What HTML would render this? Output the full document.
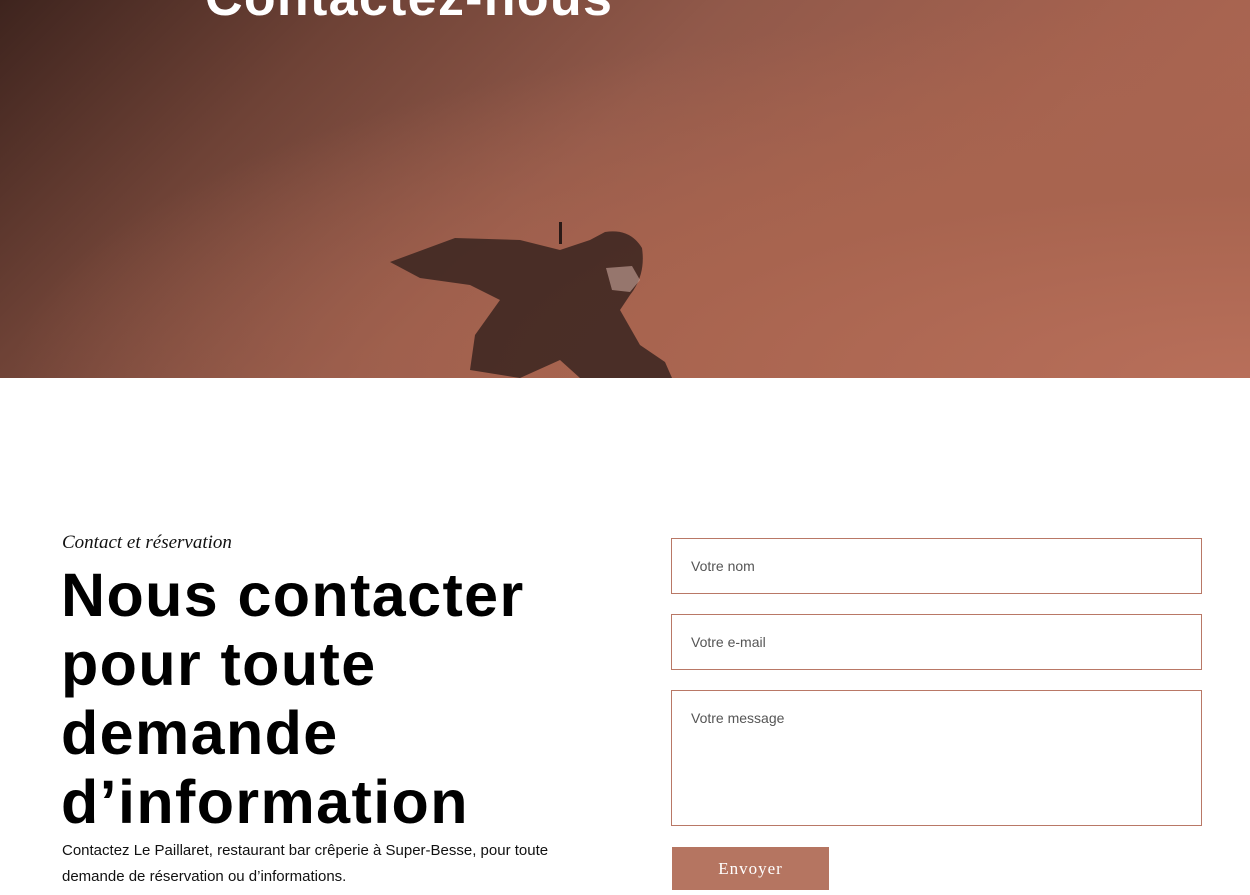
<!DOCTYPE html>
<html><head><meta charset="utf-8"><style>
body{margin:0;width:1250px;height:895px;overflow:hidden;background:#fff;font-family:"Liberation Sans",sans-serif;position:relative}
.hero{position:absolute;left:0;top:0;width:1250px;height:378px;overflow:hidden;
background:radial-gradient(ellipse at 100% 100%,#b86f5a 0%,#a8644f 35%,rgba(150,88,70,0) 70%),linear-gradient(135deg,#3e241e 0%,#6e4236 22%,#91594a 45%,#a5624f 70%,#b26a56 100%)}
.hero h1{position:absolute;left:205px;top:-32px;margin:0;color:#fff;font-size:52px;font-weight:bold;letter-spacing:1.3px}
.sub{position:absolute;left:62px;top:532px;font-family:"Liberation Serif",serif;font-style:italic;font-size:19px;color:#111}
.big{position:absolute;left:61px;top:561px;margin:0;font-size:61px;font-weight:bold;line-height:69px;color:#000;letter-spacing:1.4px}
.p{position:absolute;left:62px;top:838px;font-size:15px;line-height:26px;color:#111;width:500px}
.f{position:absolute;left:671px;width:531px;border:1px solid #b97866;box-sizing:border-box;font-size:14px;color:#555;padding-left:19px}
.btn{position:absolute;left:672px;top:847px;width:157px;height:43px;background:#b57561;color:#fff;font-family:"Liberation Serif",serif;font-size:17px;text-align:center;line-height:43px;letter-spacing:1px}
</style></head><body>
<div class="hero">
<h1>Contactez-nous</h1>
<svg width="1250" height="378" style="position:absolute;left:0;top:0">
<path d="M390 262 L455 238 L520 240 L560 250 L590 240 L605 232 Q630 228 642 248 Q646 275 630 295 L620 310 L640 345 L665 362 L672 378 L580 378 L560 360 L520 378 L470 370 L475 335 L500 300 L470 285 L420 278 Z" fill="#3a2520" opacity="0.85"/>
<rect x="559" y="222" width="3" height="22" fill="#2a1a17"/>
<path d="M606 268 L632 266 L640 280 L630 292 L612 290 Z" fill="#c9a79c" opacity="0.6"/>
</svg>
</div>
<div class="sub">Contact et réservation</div>
<h2 class="big">Nous contacter<br>pour toute<br>demande<br>d’information</h2>
<div class="p">Contactez Le Paillaret, restaurant bar crêperie à Super-Besse, pour toute demande de réservation ou d’informations.</div>
<div class="f" style="top:538px;height:56px;line-height:55px">Votre nom</div>
<div class="f" style="top:614px;height:56px;line-height:55px">Votre e-mail</div>
<div class="f" style="top:690px;height:136px;padding-top:19px">Votre message</div>
<div class="btn">Envoyer</div>
</body></html>
